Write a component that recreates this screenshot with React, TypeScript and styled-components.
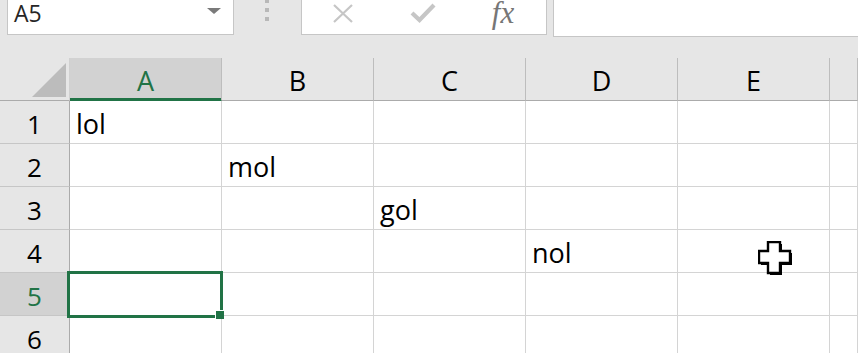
import React from 'react';
import styled, { createGlobalStyle } from 'styled-components';

const GREEN = '#217346';
const UI_FONT = `'Open Sans', 'Noto Sans', 'Liberation Sans', sans-serif`;

const columns = ['A', 'B', 'C', 'D', 'E', ''];
const rows: { [col: string]: string }[] = [
  { A: 'lol' },
  { B: 'mol' },
  { C: 'gol' },
  { D: 'nol' },
  {},
  {},
];
const activeCol = 'A';
const activeRow = 5;

const GlobalStyle = createGlobalStyle`
  html, body {
    margin: 0;
    padding: 0;
    background: #fff;
    overflow: hidden;
  }
`;

const App = () => {
  return (
    <Page>
      <GlobalStyle />
      <FormulaBar>
        <NameBox>
          <NameText>A5</NameText>
          <Caret />
        </NameBox>
        <Grip>
          <Dot />
          <Dot />
          <Dot />
        </Grip>
        <FormulaButtons>
          <IconSlot>
            <svg width='22' height='19' viewBox='0 0 22 19'>
              <path d='M2 1 L20 18 M20 1 L2 18' stroke='#c6c6c6' strokeWidth='2.2' fill='none' />
            </svg>
          </IconSlot>
          <IconSlot>
            <svg width='26' height='20' viewBox='0 0 26 20'>
              <path d='M2 10 L9.5 17 L24 2' stroke='#c6c6c6' strokeWidth='4.2' fill='none' />
            </svg>
          </IconSlot>
          <IconSlot>
            <Fx>fx</Fx>
          </IconSlot>
        </FormulaButtons>
        <FormulaInput />
      </FormulaBar>

      <Sheet>
        <Corner>
          <CornerTriangle />
        </Corner>
        {columns.map((c, i) => (
          <ColHeader key={'h' + i} $active={c === activeCol}>
            {c}
          </ColHeader>
        ))}
        {rows.map((row, r) => (
          <React.Fragment key={r}>
            <RowHeader $active={r + 1 === activeRow}>{r + 1}</RowHeader>
            {columns.map((c, i) => (
              <Cell key={i}>
                {row[c]}
                {r + 1 === activeRow && c === activeCol && (
                  <Selection>
                    <FillHandle />
                  </Selection>
                )}
              </Cell>
            ))}
          </React.Fragment>
        ))}
      </Sheet>

      <Cursor width='36' height='36' viewBox='0 0 36 36'>
        <path
          d='M12 3 H24 V12 H34 V24 H24 V34 H12 V24 H3 V12 H12 Z'
          fill='#000'
        />
        <path
          d='M10 1 H22 V10 H32 V22 H22 V32 H10 V22 H1 V10 H10 Z'
          fill='#fff'
          stroke='#000'
          strokeWidth='2.4'
        />
      </Cursor>
    </Page>
  );
};

export default App;

const Page = styled.div`
  position: relative;
  width: 858px;
  height: 353px;
  overflow: hidden;
  background: #fff;
  font-family: ${UI_FONT};
`;

const FormulaBar = styled.div`
  display: flex;
  align-items: flex-start;
  height: 58px;
  padding-left: 7px;
  background: #e6e6e6;
  box-sizing: border-box;
`;

const NameBox = styled.div`
  display: flex;
  align-items: flex-start;
  width: 227px;
  height: 35px;
  padding-left: 6px;
  box-sizing: border-box;
  background: #fff;
  border: 1px solid #c6c6c6;
  border-top: none;
`;

const NameText = styled.span`
  font-size: 23px;
  line-height: 26px;
  color: #262626;
`;

const Caret = styled.div`
  margin: 8px 12px 0 auto;
  width: 0;
  height: 0;
  border-left: 7px solid transparent;
  border-right: 7px solid transparent;
  border-top: 6px solid #7a7a7a;
`;

const Grip = styled.div`
  display: flex;
  flex-direction: column;
  gap: 5px;
  width: 67px;
  margin-top: -1px;
  padding-left: 31px;
  box-sizing: border-box;
`;

const Dot = styled.div`
  width: 4px;
  height: 4px;
  background: #b8b8b8;
`;

const FormulaButtons = styled.div`
  display: flex;
  width: 246px;
  height: 35px;
  padding-left: 1px;
  box-sizing: border-box;
  background: #fff;
  border: 1px solid #c6c6c6;
  border-top: none;
`;

const IconSlot = styled.div`
  display: flex;
  align-items: center;
  justify-content: center;
  width: 80px;
  height: 26px;
`;

const Fx = styled.span`
  font-family: 'Liberation Serif', 'DejaVu Serif', serif;
  font-style: italic;
  font-size: 31px;
  line-height: 26px;
  color: #767676;
`;

const FormulaInput = styled.div`
  flex: 1;
  height: 36px;
  margin-left: 6px;
  background: #fff;
  border-left: 1px solid #c6c6c6;
  border-bottom: 1px solid #c6c6c6;
`;

const Sheet = styled.div`
  display: grid;
  grid-template-columns: 70px repeat(5, 152px) 1fr;
  grid-auto-rows: 43px;
`;

const Corner = styled.div`
  display: flex;
  justify-content: flex-end;
  align-items: flex-end;
  padding: 0 3px 3px 0;
  box-sizing: border-box;
  background: #e6e6e6;
  border-right: 1px solid #d0d0d0;
  border-bottom: 1px solid #ababab;
`;

const CornerTriangle = styled.div`
  width: 34px;
  height: 34px;
  background: #bcbcbc;
  clip-path: polygon(100% 0, 100% 100%, 0 100%);
`;

const ColHeader = styled.div<{ $active?: boolean }>`
  display: flex;
  align-items: center;
  justify-content: center;
  padding-top: 2px;
  box-sizing: border-box;
  font-size: 27px;
  color: ${(p) => (p.$active ? GREEN : '#000')};
  background: ${(p) => (p.$active ? '#d2d2d2' : '#e6e6e6')};
  border-right: 1px solid #bdbdbd;
  border-bottom: 1px solid #ababab;
  box-shadow: ${(p) => (p.$active ? `inset 0 -2px 0 ${GREEN}` : 'none')};
  ${(p) => p.$active && `border-bottom-color: ${GREEN};`}
`;

const RowHeader = styled.div<{ $active?: boolean }>`
  display: flex;
  align-items: center;
  justify-content: center;
  padding-top: 3px;
  box-sizing: border-box;
  font-size: 26px;
  color: ${(p) => (p.$active ? GREEN : '#000')};
  background: ${(p) => (p.$active ? '#d2d2d2' : '#e6e6e6')};
  border-right: 1px solid #ababab;
  border-bottom: 1px solid #c6c6c6;
`;

const Cell = styled.div`
  position: relative;
  display: flex;
  align-items: flex-end;
  padding: 0 0 4px 6px;
  box-sizing: border-box;
  font-size: 27px;
  line-height: 30px;
  color: #000;
  background: #fff;
  border-right: 1px solid #d4d4d4;
  border-bottom: 1px solid #d4d4d4;
`;

const Selection = styled.div`
  position: absolute;
  z-index: 2;
  top: -2px;
  left: -3px;
  width: 156px;
  height: 47px;
  box-sizing: border-box;
  border: 3px solid ${GREEN};
`;

const FillHandle = styled.div`
  position: absolute;
  right: -4px;
  bottom: -4px;
  width: 8px;
  height: 8px;
  background: ${GREEN};
  border-left: 1px solid #fff;
  border-top: 1px solid #fff;
`;

const Cursor = styled.svg`
  position: absolute;
  z-index: 3;
  left: 758px;
  top: 241px;
`;
